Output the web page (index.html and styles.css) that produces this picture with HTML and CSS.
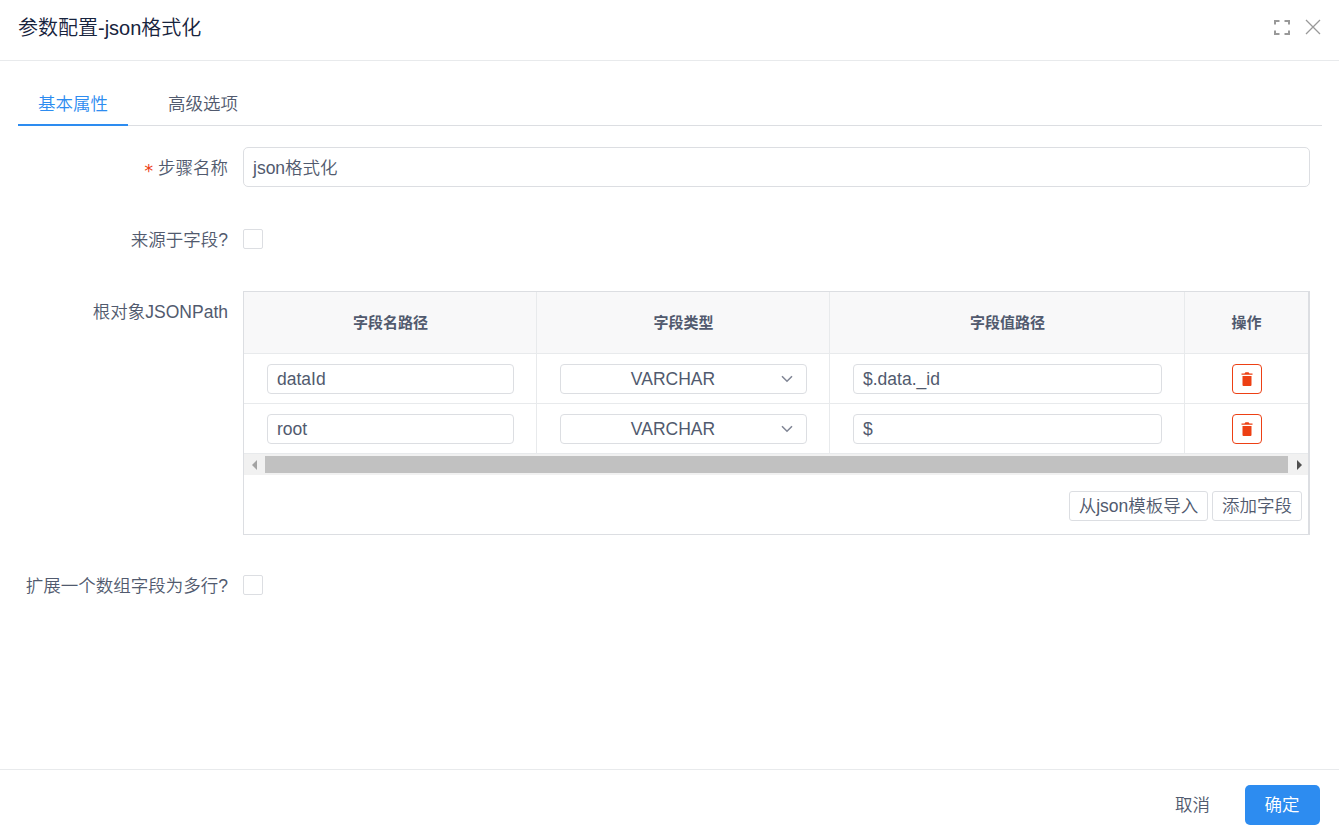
FILE: index.html
```html
<!DOCTYPE html>
<html lang="zh-CN">
<head>
<meta charset="utf-8">
<title>参数配置</title>
<link rel="stylesheet" href="styles.css">
</head>
<body>
<div class="modal">
  <header class="modal-header">
    <div class="modal-title">参数配置-json格式化</div>
    <div class="modal-tools">
      <svg class="icon-expand" width="18" height="18" viewBox="0 0 18 18"><path d="M2 6.500V3h4.500M11.500 3H16v3.500M16 12.500V16h-4.500M6.500 16H2v-3.500"/></svg>
      <svg class="icon-close" width="16" height="16" viewBox="0 0 16 16"><path d="M1 1l14 14M15 1L1 15"/></svg>
    </div>
  </header>
  <main class="modal-body">
    <nav class="tabs">
      <div class="tab tab-active">基本属性</div>
      <div class="tab">高级选项</div>
    </nav>
    <div class="form-row">
      <div class="label"><span class="required">*</span>步骤名称</div>
      <div class="input input-large">json格式化</div>
    </div>
    <div class="form-row">
      <div class="label">来源于字段?</div>
      <div class="checkbox"></div>
    </div>
    <div class="form-row form-row-table">
      <div class="label">根对象JSONPath</div>
      <div class="table">
        <div class="table-row table-head">
          <div class="cell">字段名路径</div>
          <div class="cell">字段类型</div>
          <div class="cell">字段值路径</div>
          <div class="cell">操作</div>
        </div>
        <div class="table-row">
          <div class="cell"><div class="input">dataId</div></div>
          <div class="cell"><div class="select"><span class="select-value">VARCHAR</span><svg width="12" height="8" viewBox="0 0 12 8"><path d="M1 1.300l5 4.900 5-4.900"/></svg></div></div>
          <div class="cell"><div class="input">$.data._id</div></div>
          <div class="cell"><div class="delete"><svg width="12" height="14" viewBox="0 0 12 14"><path d="M1.500 4h9v9q0 1-1 1h-7q-1 0-1-1zM.5 1.400H3.500L4.500.3h3l1 1.100h3v1.400H.5z"/></svg></div></div>
        </div>
        <div class="table-row">
          <div class="cell"><div class="input">root</div></div>
          <div class="cell"><div class="select"><span class="select-value">VARCHAR</span><svg width="12" height="8" viewBox="0 0 12 8"><path d="M1 1.300l5 4.900 5-4.900"/></svg></div></div>
          <div class="cell"><div class="input">$</div></div>
          <div class="cell"><div class="delete"><svg width="12" height="14" viewBox="0 0 12 14"><path d="M1.500 4h9v9q0 1-1 1h-7q-1 0-1-1zM.5 1.400H3.500L4.500.3h3l1 1.100h3v1.400H.5z"/></svg></div></div>
        </div>
        <div class="scrollbar">
          <svg class="arrow-left" width="5" height="10" viewBox="0 0 5 10"><path d="M5 0v10L0 5z"/></svg>
          <div class="thumb"></div>
          <svg class="arrow-right" width="5" height="10" viewBox="0 0 5 10"><path d="M0 0v10l5-5z"/></svg>
        </div>
        <div class="table-footer">
          <div class="button-small button-import">从json模板导入</div>
          <div class="button-small button-add">添加字段</div>
        </div>
      </div>
    </div>
    <div class="form-row">
      <div class="label">扩展一个数组字段为多行?</div>
      <div class="checkbox"></div>
    </div>
  </main>
  <footer class="modal-footer">
    <div class="button-cancel">取消</div>
    <div class="button-ok">确定</div>
  </footer>
</div>
</body>
</html>
```
FILE: styles.css
```css
* { box-sizing: border-box; }

body {
  margin: 0;
  background: #fff;
  color: #515a6e;
  font: 350 17.5px/26px "Liberation Sans", "Noto Sans CJK SC", sans-serif;
  white-space: nowrap;
}

svg { display: block; flex: none; }

.modal { display: flex; flex-direction: column; height: 836px; overflow: hidden; }

.modal-header {
  display: flex;
  justify-content: space-between;
  height: 61px;
  padding: 14px 18px 0;
  border-bottom: 1px solid #e8eaec;
}

.modal-title { padding-top: 1px; color: #17233d; font-size: 20px; line-height: 26px; }

.modal-tools { display: flex; align-items: center; gap: 14px; height: 26px; }

.icon-expand { fill: none; stroke: #999; stroke-width: 2; }
.icon-close { fill: none; stroke: #999; stroke-width: 1.3; }

.modal-body { flex: 1; padding: 20px 17px 0 18px; }

.tabs {
  display: flex;
  gap: 20px;
  height: 45px;
  margin-bottom: 21px;
  border-bottom: 1px solid #dcdee2;
}

.tab { height: 45px; padding: 10px 20px 0; }
.tab-active { width: 110px; border-bottom: 2px solid #2d8cf0; color: #2d8cf0; }

.form-row {
  display: grid;
  grid-template-columns: 210px 1067px;
  column-gap: 15px;
  align-items: center;
  height: 40px;
  margin-bottom: 32px;
}

.form-row-table { align-items: start; height: 244px; margin-bottom: 30px; }

.label { height: 26px; margin-top: 2px; justify-self: end; }
.form-row-table .label { margin-top: 8px; }

.required {
  margin-right: 4px;
  color: #ed4014;
  font: 400 17.5px/20px "DejaVu Sans Mono", monospace;
  vertical-align: -3px;
}

.input, .select {
  width: 100%;
  height: 30px;
  padding: 0 9px;
  border: 1px solid #dcdee2;
  border-radius: 4px;
  line-height: 28px;
}

.input-large { height: 40px; padding: 0 9px; border-radius: 5px; line-height: 40px; }

.select { display: flex; align-items: center; padding: 0 13px 0 0; }
.select-value { flex: 1; padding-left: 4px; text-align: center; }
.select svg { fill: none; stroke: #808695; stroke-width: 1.6; }

.checkbox { width: 20px; height: 20px; border: 1px solid #dcdee2; border-radius: 2px; }

.table { height: 244px; border: 1px solid #dcdee2; border-right-width: 2px; }

.table-row {
  display: grid;
  grid-template-columns: 293px 293px 355px 123px;
  height: 50px;
}

.cell {
  display: flex;
  align-items: center;
  padding: 0 22px 0 23px;
  border-right: 1px solid #e8eaec;
  border-bottom: 1px solid #e8eaec;
}
.cell:last-child { justify-content: center; padding: 0; border-right: 0; }

.table-head { height: 62px; background: #f8f8f9; font-size: 15px; font-weight: 600; }
.table-head .cell { justify-content: center; }

.delete {
  display: flex;
  align-items: center;
  justify-content: center;
  width: 30px;
  height: 30px;
  border: 1px solid #ed4014;
  border-radius: 4px;
}
.delete svg { margin-left: 1px; fill: #ed4014; }

.scrollbar {
  display: flex;
  align-items: center;
  height: 21px;
  background: #f1f1f1;
}
.arrow-left { margin: 0 8px; fill: #a3a3a3; }
.arrow-right { margin: 0 6px 0 9px; fill: #505050; }
.thumb { flex: 1; height: 17px; background: #c1c1c1; }

.table-footer { display: flex; justify-content: flex-end; gap: 4px; padding: 16px 6px 0 0; }

.button-small {
  height: 30px;
  border: 1px solid #dcdee2;
  border-radius: 3px;
  line-height: 28px;
  text-align: center;
}
.button-import { width: 139px; }
.button-add { width: 90px; }

.modal-footer {
  display: flex;
  justify-content: flex-end;
  gap: 35px;
  height: 67px;
  padding: 15px 19px 0 0;
  border-top: 1px solid #e8eaec;
  line-height: 40px;
}
.button-ok {
  width: 75px;
  height: 40px;
  padding-right: 1px;
  border-radius: 5px;
  background: #2d8cf0;
  color: #fff;
  text-align: center;
}
```
